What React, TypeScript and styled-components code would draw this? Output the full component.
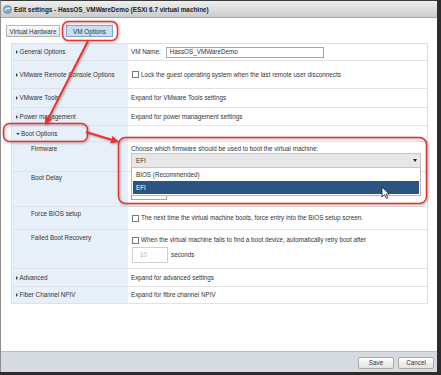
import styled, { createGlobalStyle } from "styled-components";

const GlobalStyle = createGlobalStyle`
  body {
    margin: 0;
    background: #2c2c2c;
    font-family: "Liberation Sans", Arial, sans-serif;
    color: #333;
  }
`;

const Screen = styled("div")`
  position: relative;
  width: 441px;
  height: 375px;
  overflow: hidden;
`;

const Dialog = styled("div")`
  box-sizing: border-box;
  width: 437px;
  height: 372px;
  border-top: 1px solid #3a3a3a;
  border-left: 1px solid #8e8e8e;
  background: #fff;
  display: flex;
  flex-direction: column;
`;

const TitleBar = styled("div")`
  box-sizing: border-box;
  height: 17px;
  display: flex;
  align-items: center;
  gap: 2px;
  padding-left: 2px;
  background: linear-gradient(#efefef, #cbcbcb);
  border-bottom: 1px solid #a9a9a9;
  font-weight: bold;
  font-size: 6.4px;
  color: #222;
`;

const TabBar = styled("div")`
  display: flex;
  gap: 6px;
  padding: 7px 0 0 5px;
`;

const Tab = styled("div")<{ $w: number; $active?: boolean }>`
  box-sizing: border-box;
  width: ${(p) => p.$w}px;
  height: 12px;
  display: flex;
  align-items: center;
  justify-content: center;
  font-size: 6.3px;
  color: #333;
  border: 1px solid ${(p) => (p.$active ? "#7ea7d4" : "#b4b4b4")};
  background: ${(p) =>
    p.$active ? "#c9def3" : "linear-gradient(#fbfbfb, #e4e4e4)"};
`;

const Table = styled("div")`
  margin: 6px 9px 0 10px;
  border: 1px solid #dedede;
  border-bottom: none;
`;

const Row = styled("div")<{ $h: number }>`
  box-sizing: border-box;
  height: ${(p) => p.$h}px;
  display: grid;
  grid-template-columns: 116px 1fr;
  border-bottom: 1px solid #e2e2e2;
  font-size: 6.3px;
  line-height: 8px;
`;

const LabelCell = styled("div")<{ $sub?: boolean; $top?: number }>`
  display: flex;
  align-items: ${(p) => (p.$top === undefined ? "center" : "flex-start")};
  padding-top: ${(p) => p.$top ?? 0}px;
  padding-left: ${(p) => (p.$sub ? 19 : 4)}px;
  background: #e7eff8;
  color: #333;
`;

const ValueCell = styled("div")<{ $top?: number }>`
  position: relative;
  display: flex;
  flex-direction: ${(p) => (p.$top === undefined ? "row" : "column")};
  align-items: ${(p) => (p.$top === undefined ? "center" : "stretch")};
  padding: ${(p) => p.$top ?? 0}px 6px 0 3px;
  color: #333;
`;

const Caret = styled("span")<{ $open?: boolean }>`
  width: 0;
  height: 0;
  margin-right: 2px;
  ${(p) =>
    p.$open
      ? `border-top: 2.5px solid #444;
         border-left: 2px solid transparent;
         border-right: 2px solid transparent;
         margin-right: 1px;`
      : `border-left: 2.5px solid #444;
         border-top: 2px solid transparent;
         border-bottom: 2px solid transparent;
         margin-right: 1.5px;`}
`;

const Check = styled("span")`
  box-sizing: border-box;
  width: 7px;
  height: 7px;
  margin: 0 2px 0 1px;
  border: 1px solid #7a7a7a;
  background: #fff;
  flex: none;
`;

const TextInput = styled("div")<{ $w: number; $h: number; $muted?: boolean }>`
  box-sizing: border-box;
  width: ${(p) => p.$w}px;
  height: ${(p) => p.$h}px;
  border: 1px solid ${(p) => (p.$muted ? "#d0d0d0" : "#a6a6a6")};
  display: flex;
  align-items: center;
  padding-left: ${(p) => (p.$muted ? 7 : 3)}px;
  color: ${(p) => (p.$muted ? "#b0b0b0" : "#333")};
  background: #fff;
  flex: none;
`;

const InlineLine = styled("div")`
  display: flex;
  align-items: center;
  gap: 3px;
`;

const SelectWrap = styled("div")`
  position: relative;
`;

const Select = styled("div")`
  box-sizing: border-box;
  height: 15px;
  border: 1px solid #c6c6c6;
  background: #e7e7e7;
  display: flex;
  align-items: center;
  justify-content: space-between;
  padding: 0 3px 0 4px;
  color: #333;
`;

const SelectArrow = styled("span")`
  width: 0;
  height: 0;
  border-top: 3px solid #222;
  border-left: 2px solid transparent;
  border-right: 2px solid transparent;
`;

const OptionList = styled("div")`
  position: absolute;
  top: 100%;
  left: 0;
  right: 0;
  box-sizing: border-box;
  background: #fff;
  border: 1px solid #b8b8b8;
  border-top: none;
  padding: 0 1px 1px;
  z-index: 2;
`;

const Option = styled("div")<{ $selected?: boolean }>`
  height: 13px;
  display: flex;
  align-items: center;
  padding-left: 3px;
  background: ${(p) => (p.$selected ? "#2b5482" : "transparent")};
  color: ${(p) => (p.$selected ? "#fff" : "#333")};
`;

const Footer = styled("div")`
  box-sizing: border-box;
  margin-top: auto;
  height: 21px;
  border-top: 1px solid #b8bdc3;
  background: #d6dbe1;
  display: flex;
  justify-content: flex-end;
  align-items: center;
  gap: 4px;
  padding: 1px 3px 0 0;
`;

const Button = styled("div")`
  box-sizing: border-box;
  width: 36px;
  height: 12px;
  border: 1px solid #a9a9a9;
  border-radius: 2px;
  background: linear-gradient(#fdfdfd, #e2e2e2);
  display: flex;
  align-items: center;
  justify-content: center;
  font-size: 6.3px;
  color: #333;
`;

const Overlay = styled("svg")`
  position: absolute;
  top: 0;
  left: 0;
  pointer-events: none;
  z-index: 5;
`;

const RED = "#e6322f";

function Arrow({ x1, y1, x2, y2 }: { x1: number; y1: number; x2: number; y2: number }) {
  const dx = x2 - x1;
  const dy = y2 - y1;
  const len = Math.hypot(dx, dy);
  const ux = dx / len;
  const uy = dy / len;
  const bx = x2 - ux * 8;
  const by = y2 - uy * 8;
  const px = -uy * 3.8;
  const py = ux * 3.8;
  return (
    <g>
      <line x1={x1} y1={y1} x2={bx} y2={by} stroke={RED} strokeWidth={2} />
      <polygon
        points={`${x2},${y2} ${bx + px},${by + py} ${bx - px},${by - py}`}
        fill={RED}
      />
    </g>
  );
}

function Annotations() {
  return (
    <Overlay width={441} height={375} viewBox="0 0 441 375">
      <defs>
        <filter id="sh" x="-10%" y="-10%" width="130%" height="130%">
          <feDropShadow dx="1" dy="1" stdDeviation="0.8" floodColor="#000" floodOpacity="0.35" />
        </filter>
      </defs>
      <g filter="url(#sh)" fill="none" stroke={RED} strokeWidth={1.5}>
        <rect x={62.5} y={21.5} width={55} height={19} rx={6} />
        <rect x={3.5} y={123.5} width={84} height={18} rx={6} />
        <rect x={118.5} y={137.5} width={308} height={66} rx={7} />
      </g>
      <g filter="url(#sh)">
        <Arrow x1={88} y1={41} x2={45} y2={125} />
        <Arrow x1={86} y1={132} x2={119} y2={142} />
      </g>
      {/* mouse pointer over the EFI option */}
      <path
        d="M382 187 L382 197 L384.5 194.6 L386.4 198.4 L387.9 197.7 L386.1 194 L389.3 194 Z"
        fill="#fff"
        stroke="#000"
        strokeWidth={0.7}
      />
    </Overlay>
  );
}

function TitleIcon() {
  return (
    <svg width={9} height={9} viewBox="0 0 9 9">
      <circle cx={4.5} cy={4.5} r={4} fill="#7fa9d6" />
      <path d="M1.8 5.6 C2.6 3.4 5 2.6 7.2 3.6" stroke="#fff" strokeWidth={1.1} fill="none" />
      <circle cx={4.5} cy={4.5} r={4} fill="none" stroke="#56799f" strokeWidth={0.6} />
    </svg>
  );
}

export default function App() {
  return (
    <Screen>
      <GlobalStyle />
      <Dialog>
        <TitleBar>
          <TitleIcon />
          <span>Edit settings - HassOS_VMWareDemo (ESXi 6.7 virtual machine)</span>
        </TitleBar>
        <TabBar>
          <Tab $w={54}>Virtual Hardware</Tab>
          <Tab $w={47} $active>
            VM Options
          </Tab>
        </TabBar>
        <Table>
          <Row $h={17}>
            <LabelCell>
              <Caret />
              General Options
            </LabelCell>
            <ValueCell>
              <InlineLine>
                VM Name:
                <TextInput $w={158} $h={11} style={{ marginLeft: 2 }}>
                  HassOS_VMWareDemo
                </TextInput>
              </InlineLine>
            </ValueCell>
          </Row>
          <Row $h={28}>
            <LabelCell>
              <Caret />
              VMware Remote Console Options
            </LabelCell>
            <ValueCell>
              <Check />
              Lock the guest operating system when the last remote user disconnects
            </ValueCell>
          </Row>
          <Row $h={19}>
            <LabelCell>
              <Caret />
              VMware Tools
            </LabelCell>
            <ValueCell>Expand for VMware Tools settings</ValueCell>
          </Row>
          <Row $h={18}>
            <LabelCell>
              <Caret />
              Power management
            </LabelCell>
            <ValueCell>Expand for power management settings</ValueCell>
          </Row>
          <Row $h={16}>
            <LabelCell>
              <Caret $open />
              Boot Options
            </LabelCell>
            <ValueCell />
          </Row>
          <Row $h={30}>
            <LabelCell $sub $top={3}>
              Firmware
            </LabelCell>
            <ValueCell $top={3}>
              <div>Choose which firmware should be used to boot the virtual machine:</div>
              <SelectWrap>
                <Select>
                  EFI
                  <SelectArrow />
                </Select>
                <OptionList>
                  <Option>BIOS (Recommended)</Option>
                  <Option $selected>EFI</Option>
                </OptionList>
              </SelectWrap>
            </ValueCell>
          </Row>
          <Row $h={35}>
            <LabelCell $sub $top={2}>
              Boot Delay
            </LabelCell>
            <ValueCell $top={14}>
              <InlineLine>
                <TextInput $w={36} $h={14} />
              </InlineLine>
            </ValueCell>
          </Row>
          <Row $h={23}>
            <LabelCell $sub $top={3}>
              Force BIOS setup
            </LabelCell>
            <ValueCell>
              <Check />
              The next time the virtual machine boots, force entry into the BIOS setup screen.
            </ValueCell>
          </Row>
          <Row $h={39}>
            <LabelCell $sub $top={4}>
              Failed Boot Recovery
            </LabelCell>
            <ValueCell $top={6}>
              <InlineLine style={{ gap: 0 }}>
                <Check />
                When the virtual machine fails to find a boot device, automatically retry boot after
              </InlineLine>
              <InlineLine style={{ marginTop: 3, marginLeft: 1 }}>
                <TextInput $w={36} $h={16} $muted>
                  10
                </TextInput>
                seconds
              </InlineLine>
            </ValueCell>
          </Row>
          <Row $h={18}>
            <LabelCell>
              <Caret />
              Advanced
            </LabelCell>
            <ValueCell>Expand for advanced settings</ValueCell>
          </Row>
          <Row $h={17}>
            <LabelCell>
              <Caret />
              Fiber Channel NPIV
            </LabelCell>
            <ValueCell>Expand for fibre channel NPIV</ValueCell>
          </Row>
        </Table>
        <Footer>
          <Button>Save</Button>
          <Button>Cancel</Button>
        </Footer>
      </Dialog>
      <Annotations />
    </Screen>
  );
}
